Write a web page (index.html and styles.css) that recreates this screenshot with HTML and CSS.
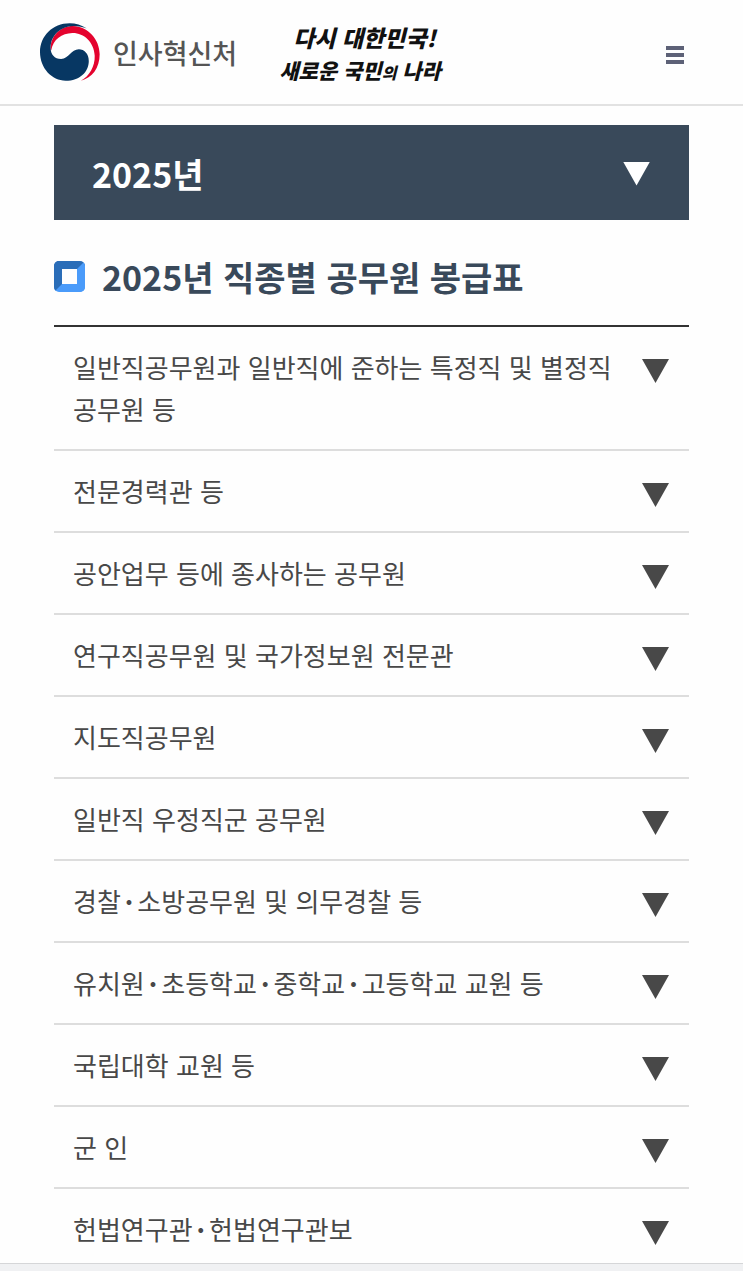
FILE: index.html
```html
<!DOCTYPE html>
<html lang="ko">
<head>
  <meta charset="UTF-8" />
  <meta name="viewport" content="width=device-width, initial-scale=1.0"/>
  <title>공무원 봉급표 | 인사혁신처</title>
  <link rel="stylesheet" href="styles.css">
</head>
<body>
  <header>
    <a class="logo" href="#">
      <svg class="emblem" viewBox="30 35 182 176" aria-hidden="true">
        <path fill="#e4032e" d="M62 118 C60 74 92 44 130 44 C176 46 211 84 211 130 C211 172 188 202 154 210 C180 196 197 166 196 134 C194 92 162 64 128 65 C96 66 70 84 64 118 Z"/>
        <path fill="#073763" d="M172 52 C156 41 138 36 120 36 C68 36 30 75 30 123 C30 172 66 210 108 210 C150 210 178 184 178 150 C178 129 164 115 148 115 C124 115 118 144 94 144 C74 144 62 130 62 110 C63 72 92 45 132 44 C148 44 160 47 172 52 Z"/>
      </svg>
      <span class="logo-name">인사혁신처</span>
    </a>
    <p class="slogan">
      <span class="slogan-top">다시 대한민국!</span>
      <span class="slogan-bottom">새로운 국민<small>의</small> 나라</span>
    </p>
    <button class="menu-btn" type="button" aria-label="전체 메뉴">
      <svg viewBox="0 0 18 18" aria-hidden="true">
        <path fill="#5d6177" d="M0 0h18v4H0zM0 7h18v4H0zM0 14h18v4H0z"/>
      </svg>
    </button>
  </header>

  <main class="container">
    <button class="year-btn" type="button">2025년 <i class="arrow"></i></button>

    <h2>2025년 직종별 공무원 봉급표</h2>

    <ul class="job-list">
      <li><button type="button"><span>일반직공무원과 일반직에 준하는 특정직 및 별정직 공무원 등</span><i class="arrow"></i></button></li>
      <li><button type="button"><span>전문경력관 등</span><i class="arrow"></i></button></li>
      <li><button type="button"><span>공안업무 등에 종사하는 공무원</span><i class="arrow"></i></button></li>
      <li><button type="button"><span>연구직공무원 및 국가정보원 전문관</span><i class="arrow"></i></button></li>
      <li><button type="button"><span>지도직공무원</span><i class="arrow"></i></button></li>
      <li><button type="button"><span>일반직 우정직군 공무원</span><i class="arrow"></i></button></li>
      <li><button type="button"><span>경찰<b class="dot">·</b>소방공무원 및 의무경찰 등</span><i class="arrow"></i></button></li>
      <li><button type="button"><span>유치원<b class="dot">·</b>초등학교<b class="dot">·</b>중학교<b class="dot">·</b>고등학교 교원 등</span><i class="arrow"></i></button></li>
      <li><button type="button"><span>국립대학 교원 등</span><i class="arrow"></i></button></li>
      <li><button type="button"><span>군 인</span><i class="arrow"></i></button></li>
      <li><button type="button"><span>헌법연구관<b class="dot">·</b>헌법연구관보</span><i class="arrow"></i></button></li>
    </ul>
  </main>

  <div class="bottom-bar"></div>
</body>
</html>
```
FILE: styles.css
```css
* {
  box-sizing: border-box;
}

body {
  margin: 0;
  font-family: "Noto Sans CJK KR", sans-serif;
  background: #fefefe;
  color: #484848;
}

button {
  border: none;
  background: none;
  font-family: inherit;
  cursor: pointer;
}

header {
  display: flex;
  align-items: center;
  height: 106px;
  padding: 0 54px 0 40px;
  border-bottom: 2px solid #e2e2e2;
}

.logo {
  display: flex;
  align-items: center;
  gap: 13px;
  color: #555;
  text-decoration: none;
}

.emblem {
  width: 60px;
  height: 58px;
}

.logo-name {
  font-size: 27px;
  font-weight: 500;
}

.slogan {
  display: flex;
  flex-direction: column;
  margin: 6px 0 0 42px;
  color: #111;
  font-size: 21px;
  font-style: italic;
  font-weight: 900;
  line-height: 33px;
  white-space: nowrap;
}

.slogan-top {
  padding-left: 14px;
  font-size: 23px;
}

.slogan small {
  font-size: 16px;
}

.menu-btn {
  display: flex;
  margin: 6px 0 0 auto;
  padding: 5px;
}

.menu-btn svg {
  width: 18px;
  height: 18px;
}

.container {
  padding: 19px 54px 0;
}

.arrow {
  flex: none;
  width: 27px;
  height: 24px;
  background: currentColor;
  clip-path: polygon(0 0, 100% 0, 50% 100%);
}

.year-btn {
  display: flex;
  justify-content: space-between;
  align-items: center;
  width: 100%;
  height: 95px;
  padding: 2px 39px 0 38px;
  background: #39495a;
  color: white;
  font-size: 34px;
  font-weight: bold;
}

h2 {
  display: flex;
  align-items: center;
  gap: 17px;
  margin: 0;
  padding: 28px 0 20px;
  color: #39495a;
  font-size: 34px;
  line-height: 57px;
}

h2::before {
  content: "";
  box-sizing: border-box;
  width: 31px;
  height: 31px;
  border: 8px solid;
  border-color: #2a6db8 #4a9bfa #4a9bfa #2a6db8;
  border-radius: 5px;
}

.job-list {
  margin: 0;
  padding: 0;
  border-top: 2px solid #333;
  list-style: none;
}

.job-list li {
  border-bottom: 2px solid #ddd;
}

.job-list button {
  display: flex;
  justify-content: space-between;
  align-items: flex-start;
  width: 100%;
  padding: 19px 20px 19px 19px;
  color: #484848;
  font-size: 26px;
  line-height: 42px;
  text-align: left;
  word-break: keep-all;
}

.job-list .arrow {
  margin: 13px 0 0 15px;
}

.dot {
  padding: 0 4px;
}

.bottom-bar {
  position: fixed;
  right: 0;
  bottom: 0;
  left: 0;
  height: 8px;
  border-top: 1px solid #d5d6d8;
  background: #f0f1f3;
}
```
